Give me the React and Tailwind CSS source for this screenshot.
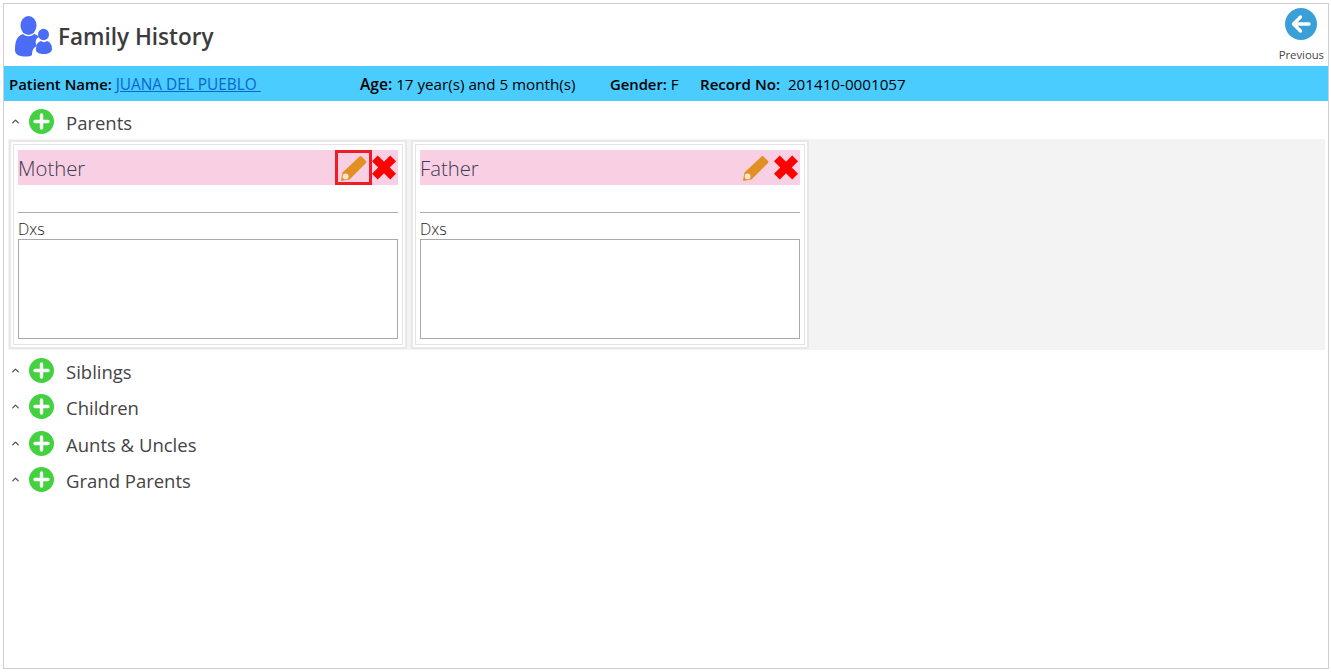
import { ChevronUp } from "lucide-react"

const font = { fontFamily: '"Open Sans", "Noto Sans", sans-serif' }

function PlusCircle() {
  return (
    <svg width="25" height="25" viewBox="0 0 25 25" className="shrink-0">
      <circle cx="12.5" cy="12.5" r="12.5" fill="#44d13f" />
      <path d="M12.5 6v13M6 12.5h13" stroke="#fff" strokeWidth="3.4" strokeLinecap="round" />
    </svg>
  )
}

function PeopleIcon() {
  return (
    <svg width="37" height="41" viewBox="0 0 37 41" className="shrink-0">
      <ellipse cx="13.5" cy="9.500" rx="8" ry="9.500" fill="#4a6cf7" />
      <path d="M0 34c0-9 2-14 8-16 3 3 8 3 11 0 2 .5 4 1.500 5 3-4 2-4 6-2 9-3 1-5 4-5 9-1 1-4 1.500-6 1.500C5 40.500 0 39 0 34Z" fill="#4a6cf7" />
      <ellipse cx="28.500" cy="18.500" rx="5.500" ry="5.800" fill="#4a6cf7" />
      <path d="M21 34c0-5 1.500-8 5-9 1.500 1.500 4.500 1.500 6 0 3.500 1 5 4 5 8 0 3-3.500 5-8 5s-8-1.500-8-4Z" fill="#4a6cf7" />
    </svg>
  )
}

function PencilIcon() {
  return (
    <svg width="26" height="26" viewBox="0 0 26 26">
      <path d="M18.500 1.500a1.500 1.500 0 0 1 2 0l4.500 4.500a1.500 1.500 0 0 1 0 2L8.500 24.500 0 26 1.500 17.500Z" fill="#e39022" />
      <circle cx="4.600" cy="21.400" r="2.900" fill="#fbe3d8" />
    </svg>
  )
}

function CrossIcon() {
  return (
    <svg width="24" height="25" viewBox="0 0 25 26" className="shrink-0 mr-[2px]">
      <path d="M0 6.500 6 .5 12.500 7 19 .5 25 6.500 18.500 13 25 19.500 19 25.500 12.500 19 6 25.500 0 19.500 6.500 13Z" fill="#ff0000" />
    </svg>
  )
}

function MemberCard({ name, selected }) {
  return (
    <div className="w-[398px] h-[209px] border-2 border-[#e8e8e8] bg-white p-[2px]">
      <div className="h-full border border-[#e4e4e4] px-[4px] pt-[5px]">
        <div className="h-[35px] bg-[#f9cfe3] flex items-center justify-between">
          <span className="text-[20.3px] font-light text-[#3c3c50] pt-[2px]">{name}</span>
          <div className="flex items-center">
            <div className={selected ? "w-[37px] h-[35px] border-[3px] border-[#ee1c25] flex items-center justify-center" : "w-[37px] h-[35px] flex items-center justify-center"}>
              <PencilIcon />
            </div>
            <CrossIcon />
          </div>
        </div>
        <div className="mt-[27px] border-t border-[#adadad]" />
        <div className="h-[26px] pt-[3px] text-[16px] leading-[26px] font-light text-[#222]">Dxs</div>
        <div className="h-[100px] border border-[#a9a9a9]" />
      </div>
    </div>
  )
}

function Section({ title, className }) {
  return (
    <div className={"flex items-center pl-[6px] " + className}>
      <ChevronUp className="w-[11px] h-[11px] text-[#555]" strokeWidth={3} />
      <div className="ml-[8px]"><PlusCircle /></div>
      <span className="ml-[12px] pt-[3px] text-[18.5px] text-[#444]">{title}</span>
    </div>
  )
}

export default function App() {
  return (
    <div className="h-[672px] w-[1331px] bg-white pl-[3px] pt-[3px] pr-[2px] pb-[3px]" style={font}>
      <div className="h-[666px] border border-[#cfcfcf] bg-white">
        <div className="h-[62px] flex justify-between">
          <div className="flex items-center pl-[11px] pt-[3px]">
            <PeopleIcon />
            <h1 className="ml-[6px] text-[22.5px] font-semibold text-[#3c3c3c]">Family History</h1>
          </div>
          <div className="flex flex-col items-center pr-[4px] pt-[4px]">
            <svg width="32" height="32" viewBox="0 0 32 32">
              <circle cx="16" cy="16" r="16" fill="#3a9fd6" />
              <path d="M24 16H9M15.500 9 8.500 16l7 7" stroke="#fff" strokeWidth="3.400" fill="none" strokeLinecap="round" strokeLinejoin="round" />
            </svg>
            <span className="mt-[7px] text-[11.3px] leading-[16px] text-[#444]">Previous</span>
          </div>
        </div>

        <div className="h-[35px] bg-[#4accff] flex items-center pl-[5px] pt-[2px] text-[15.2px] text-black">
          <div className="w-[351px]">
            <span className="font-semibold text-[14.9px]">Patient Name: </span>
            <a href="#" className="text-[15.4px] text-[#0b66cc] underline">JUANA DEL PUEBLO&nbsp;</a>
          </div>
          <div className="w-[250px]"><span className="font-semibold text-[15.6px]">Age:</span> 17 year(s) and 5 month(s)</div>
          <div className="w-[90px]"><span className="font-semibold text-[14.8px]">Gender:</span> F</div>
          <div><span className="font-semibold text-[15.1px]">Record No:</span>&nbsp; 201410-0001057</div>
        </div>

        <Section title="Parents" className="h-[38px] pt-[3px]" />
        <div className="ml-[4px] mr-[3px] h-[211px] bg-[#f3f3f3] p-[1px] flex gap-[4px]">
          <MemberCard name="Mother" selected />
          <MemberCard name="Father" />
        </div>
        <div className="pt-[2px]">
          <Section title="Siblings" className="h-[36px]" />
          <Section title="Children" className="h-[37px]" />
          <Section title="Aunts & Uncles" className="h-[36px]" />
          <Section title="Grand Parents" className="h-[37px]" />
        </div>
      </div>
    </div>
  )
}
